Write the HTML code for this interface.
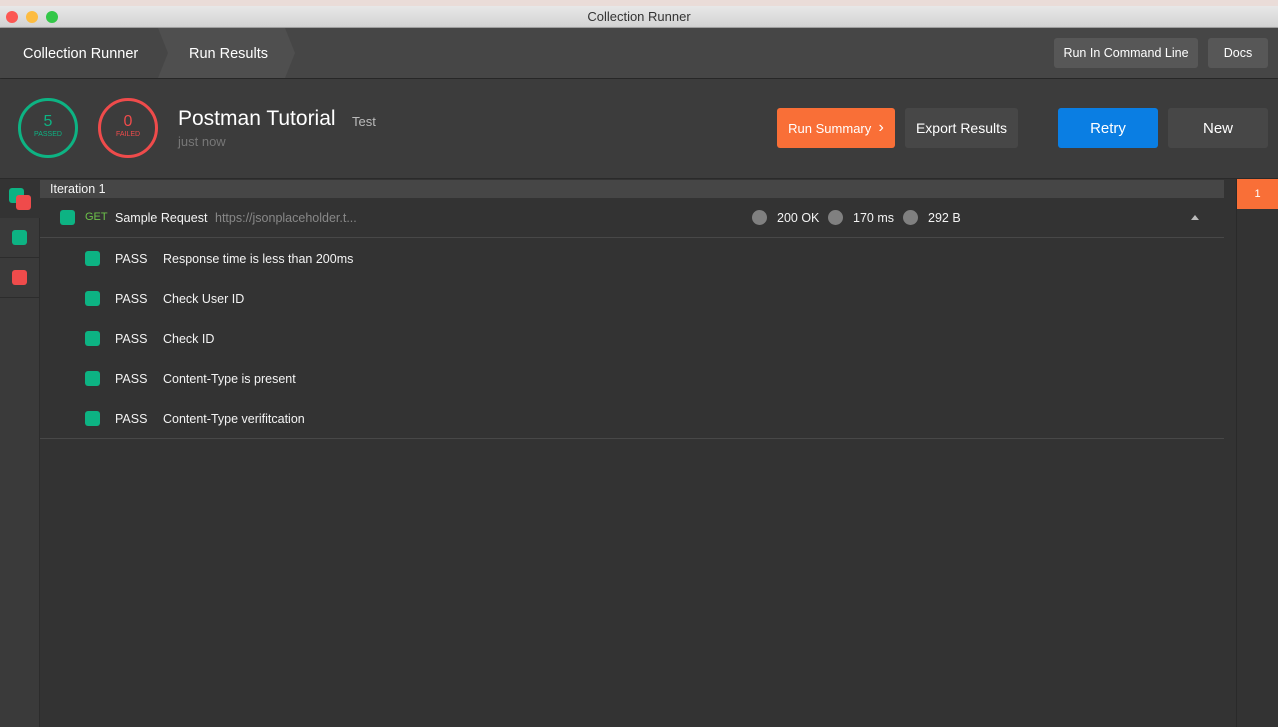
<!DOCTYPE html><html><head><style>
*{margin:0;padding:0;box-sizing:border-box}
body{width:1278px;height:727px;overflow:hidden;background:#333;font-family:"Liberation Sans",sans-serif;color:#fff;position:relative}
.a{position:absolute}
.btn{position:absolute;border-radius:3px;display:flex;align-items:center;justify-content:center;font-size:14px}
.sq{position:absolute;width:15px;height:15px;border-radius:3px;background:#0db383}
.t{position:absolute;font-size:12.5px;color:#f4f4f4}
</style></head><body>
<div class="a" style="left:0;top:0;width:1278px;height:6px;background:#eadcd8"></div>
<div class="a" style="left:0;top:6px;width:1278px;height:22px;background:linear-gradient(#e8e8e8,#d2d2d2);border-bottom:1px solid #aaa;color:#333;font-size:13px;text-align:center;line-height:22px">Collection Runner</div>
<div class="a" style="left:6px;top:11px;width:12px;height:12px;border-radius:50%;background:#fc5753"></div>
<div class="a" style="left:26px;top:11px;width:12px;height:12px;border-radius:50%;background:#fdbc40"></div>
<div class="a" style="left:46px;top:11px;width:12px;height:12px;border-radius:50%;background:#33c748"></div>
<div class="a" style="left:0;top:28px;width:1278px;height:50px;background:#464646;box-shadow:0 1px 2px #222"></div>
<svg class="a" style="left:158px;top:28px" width="140" height="50"><polygon points="0,0 127,0 137,25 127,50 0,50 10,25" fill="#4f4f4f"/></svg>
<div class="a" style="left:23px;top:46px;font-size:14.5px;">Collection Runner</div>
<div class="a" style="left:189px;top:46px;font-size:14.5px;">Run Results</div>
<div class="btn" style="left:1054px;top:38px;width:144px;height:30px;background:#575757;font-size:12.5px">Run In Command Line</div>
<div class="btn" style="left:1208px;top:38px;width:60px;height:30px;background:#575757;font-size:12.5px">Docs</div>
<div class="a" style="left:0;top:79px;width:1278px;height:99px;background:#3c3c3c"></div>
<div class="a" style="left:18px;top:98px;width:60px;height:60px;border:3px solid #0db383;border-radius:50%;text-align:center;color:#0db383"><div style="font-size:16px;margin-top:12px">5</div><div style="font-size:7px">PASSED</div></div>
<div class="a" style="left:98px;top:98px;width:60px;height:60px;border:3px solid #ef4b4b;border-radius:50%;text-align:center;color:#ef4b4b"><div style="font-size:16px;margin-top:12px">0</div><div style="font-size:7px">FAILED</div></div>
<div class="a" style="left:178px;top:107px;font-size:21px">Postman Tutorial</div>
<div class="a" style="left:352px;top:114px;font-size:13px;color:#bbb">Test</div>
<div class="a" style="left:178px;top:134px;font-size:13px;color:#777">just now</div>
<div class="btn" style="left:777px;top:108px;width:118px;height:40px;background:#f96f37;font-size:13px">Run Summary&nbsp;&nbsp;<span style="font-size:16px">&#x203A;</span></div>
<div class="btn" style="left:905px;top:108px;width:113px;height:40px;background:#474747">Export Results</div>
<div class="btn" style="left:1058px;top:108px;width:100px;height:40px;background:#0a7ee3;font-size:15px">Retry</div>
<div class="btn" style="left:1168px;top:108px;width:100px;height:40px;background:#474747;font-size:15px">New</div>
<div class="a" style="left:0;top:178px;width:1278px;height:1px;background:#2a2a2a"></div>
<div class="a" style="left:0;top:179px;width:40px;height:548px;background:#3a3a3a;border-right:1px solid #2c2c2c"></div>
<div class="a" style="left:0;top:179px;width:40px;height:39px;background:#333"></div>
<div class="a" style="left:0;top:257px;width:40px;height:1px;background:#2c2c2c"></div>
<div class="a" style="left:0;top:297px;width:40px;height:1px;background:#2c2c2c"></div>
<div class="sq" style="left:9px;top:188px"></div>
<div class="sq" style="left:16px;top:195px;background:#ef4b4b"></div>
<div class="sq" style="left:12px;top:230px"></div>
<div class="sq" style="left:12px;top:270px;background:#ef4b4b"></div>
<div class="a" style="left:1236px;top:179px;width:42px;height:548px;background:#333;border-left:1px solid #2a2a2a"></div>
<div class="a" style="left:1237px;top:179px;width:41px;height:30px;background:#f96f37;font-size:11px;text-align:center;line-height:30px">1</div>
<div class="a" style="left:40px;top:180px;width:1184px;height:18px;background:#464646"></div>
<div class="t" style="left:50px;top:182px">Iteration 1</div>
<div class="sq" style="left:60px;top:210px"></div>
<div class="a" style="left:85px;top:211px;font-size:11px;color:#6cc24a">GET</div>
<div class="t" style="left:115px;top:211px">Sample Request</div>
<div class="a" style="left:215px;top:211px;font-size:12.5px;color:#888">https://jsonplaceholder.t...</div>
<div class="a" style="left:752px;top:210px;width:15px;height:15px;border-radius:50%;background:#808080"></div>
<div class="t" style="left:777px;top:211px">200 OK</div>
<div class="a" style="left:828px;top:210px;width:15px;height:15px;border-radius:50%;background:#808080"></div>
<div class="t" style="left:853px;top:211px">170 ms</div>
<div class="a" style="left:903px;top:210px;width:15px;height:15px;border-radius:50%;background:#808080"></div>
<div class="t" style="left:928px;top:211px">292 B</div>
<div class="a" style="left:1191px;top:215px;width:0;height:0;border-left:4px solid transparent;border-right:4px solid transparent;border-bottom:5px solid #bbb"></div>
<div class="a" style="left:40px;top:237px;width:1184px;height:1px;background:#484848"></div>
<div class="sq" style="left:85px;top:251px"></div><div class="t" style="left:115px;top:252px">PASS</div><div class="t" style="left:163px;top:252px">Response time is less than 200ms</div>
<div class="sq" style="left:85px;top:291px"></div><div class="t" style="left:115px;top:292px">PASS</div><div class="t" style="left:163px;top:292px">Check User ID</div>
<div class="sq" style="left:85px;top:331px"></div><div class="t" style="left:115px;top:332px">PASS</div><div class="t" style="left:163px;top:332px">Check ID</div>
<div class="sq" style="left:85px;top:371px"></div><div class="t" style="left:115px;top:372px">PASS</div><div class="t" style="left:163px;top:372px">Content-Type is present</div>
<div class="sq" style="left:85px;top:411px"></div><div class="t" style="left:115px;top:412px">PASS</div><div class="t" style="left:163px;top:412px">Content-Type verifitcation</div>
<div class="a" style="left:40px;top:438px;width:1184px;height:1px;background:#484848"></div>
</body></html>
